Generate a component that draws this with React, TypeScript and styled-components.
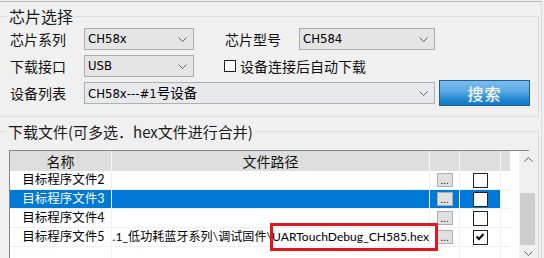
import React from "react";
import styled, { createGlobalStyle } from "styled-components";

const CJK = `"Noto Sans CJK SC", "Noto Sans", sans-serif`;
const LATIN_UI = `"Lato", "Noto Sans CJK SC", sans-serif`;
const NARROW = `"Liberation Sans Narrow", "DejaVu Sans Condensed", "Liberation Sans", sans-serif`;

const GlobalStyle = createGlobalStyle`
  html, body { margin: 0; padding: 0; background: #f0f0f0; }
  body { width: 544px; height: 258px; overflow: hidden; font-family: ${CJK}; color: #000; }
  #root { width: 544px; height: 258px; overflow: hidden; }
  * { box-sizing: border-box; }
`;

const Page = styled.div`
  width: 544px;
  height: 258px;
  overflow: hidden;
  padding-top: 1px;
  background: #f0f0f0;
`;

const Frame = styled.div`
  margin-left: -10px;
  width: 552px;
  height: 320px;
  border-top: 1px solid #b9b9b9;
  border-right: 1px solid #dcdcdc;
  padding-right: 2px;
`;

const Group = styled.fieldset<{ $pt: number; $pb: number; $pl: number }>`
  margin: 5px 0 0 0;
  padding: ${(p) => p.$pt}px 0 ${(p) => p.$pb}px ${(p) => p.$pl}px;
  border: 1px solid #dcdcdc;
  min-width: 0;
`;

const Legend = styled.legend<{ $size: number }>`
  font: ${(p) => p.$size}px/19px ${CJK};
  padding: 0 2px;
  margin-left: -3px;
  color: #1a1a1a;
`;

const Form = styled.div`
  display: grid;
  grid-template-columns: 74px 110px 31px 74px 136px 4px 91px;
  grid-template-rows: repeat(3, 22px);
  row-gap: 5px;
  align-items: center;
`;

const Label = styled.div<{ $col?: string }>`
  grid-column: ${(p) => p.$col || "auto"};
  font: 14px/22px ${CJK};
  color: #111;
  white-space: nowrap;
`;

const Combo = styled.div<{ $col: string; $light?: boolean }>`
  grid-column: ${(p) => p.$col};
  height: 22px;
  border: 1px solid ${(p) => (p.$light ? "#aab0b6" : "#adadad")};
  background: ${(p) => (p.$light ? "#e7e9ec" : "#e5e5e5")};
  display: flex;
  align-items: center;
  justify-content: space-between;
  padding: 0 6px 0 3px;
`;

const ComboText = styled.span`
  font: 13px/20px ${NARROW};
  color: #000;
  white-space: nowrap;
  & > b {
    font-weight: normal;
    font-family: ${CJK};
    font-size: 13.5px;
  }
`;

const CheckRow = styled.label`
  grid-column: 4 / span 3;
  display: flex;
  align-items: center;
  gap: 4px;
  margin-left: -1px;
  font: 14px/22px ${CJK};
  color: #111;
  white-space: nowrap;
`;

const Box = styled.span<{ $size: number }>`
  width: ${(p) => p.$size}px;
  height: ${(p) => p.$size}px;
  border: 1px solid #222;
  background: #fff;
  display: inline-flex;
  align-items: center;
  justify-content: center;
  flex: none;
`;

const SearchButton = styled.button`
  grid-column: 7;
  align-self: center;
  width: 91px;
  height: 26px;
  padding: 0;
  border: 1px solid #1b5f9e;
  background: linear-gradient(to bottom, #7dbdee 0%, #58a7e2 45%, #2489d2 75%, #0c78c6 100%);
  color: #fff;
  font: 16px/24px ${CJK};
  letter-spacing: 1px;
  text-shadow: 0 0 2px rgba(255, 255, 255, 0.4);
`;

const TableBox = styled.div`
  position: relative;
  width: 520px;
  height: 130px;
  border: 1px solid #828790;
  background: #fff;
  display: flex;
`;

const Rows = styled.div`
  width: 500px;
  flex: none;
`;

const HeaderRow = styled.div`
  display: flex;
  height: 20px;
  background: #dedede;
`;

const HeadCell = styled.div<{ $w: number; $last?: boolean }>`
  width: ${(p) => p.$w}px;
  flex: none;
  border-right: ${(p) => (p.$last ? "none" : "1px solid #f7f7f7")};
  font: 14px/20px ${CJK};
  color: #111;
  text-align: center;
`;

const Row = styled.div`
  display: flex;
  height: 19px;
  border-bottom: 1px solid #f0f0f0;
`;

const Cell = styled.div<{ $w: number; $sel?: boolean; $align?: string; $last?: boolean }>`
  width: ${(p) => p.$w}px;
  flex: none;
  height: 18px;
  border-right: ${(p) => (p.$last ? "none" : `1px solid ${p.$sel ? "#f4f8fc" : "#f0f0f0"}`)};
  background: ${(p) => (p.$sel ? "#0078d7" : "#fff")};
  color: ${(p) => (p.$sel ? "#fff" : "#000")};
  display: flex;
  align-items: center;
  justify-content: ${(p) => p.$align || "center"};
  overflow: hidden;
  font: 12.5px/18px ${LATIN_UI};
  white-space: nowrap;
`;

const NameText = styled.span`
  padding-left: 6px;
`;

const PathText = styled.span`
  flex: none;
  font-size: 12.1px;
`;

const DotsButton = styled.span`
  width: 16px;
  height: 14px;
  border: 1px solid #adadad;
  background: #e1e1e1;
  color: #000;
  font: 10px/14px "Liberation Sans", sans-serif;
  text-align: center;
  letter-spacing: 0;
`;

const ScrollBar = styled.div`
  width: 18px;
  margin-left: 9px;
  flex: none;
  background: #f0f0f0;
  display: flex;
  flex-direction: column;
`;

const Arrow = styled.div`
  height: 17px;
  display: flex;
  align-items: center;
  justify-content: center;
  flex: none;
`;

const Track = styled.div`
  height: 77px;
  display: flex;
  flex-direction: column;
  justify-content: flex-end;
  flex: none;
`;

const Thumb = styled.div`
  height: 52px;
  margin: 0 2px 0 1px;
  background: #cdcdcd;
`;

const Highlight = styled.div`
  position: absolute;
  left: 260px;
  top: 72px;
  width: 168px;
  height: 28px;
  border: 3px solid #e5151d;
  pointer-events: none;
`;

const Chevron = ({ up }: { up?: boolean }) => (
  <svg width="9" height="5" viewBox="0 0 9 5">
    <polyline
      points={up ? "0.5,4.5 4.5,0.5 8.5,4.5" : "0.5,0.5 4.5,4.5 8.5,0.5"}
      fill="none"
      stroke="#606060"
      strokeWidth="1"
    />
  </svg>
);

const Tick = () => (
  <svg width="10" height="8" viewBox="0 0 10 8">
    <polyline points="1.5,3.5 4,6 8.5,1" fill="none" stroke="#000" strokeWidth="2" />
  </svg>
);

type FileRow = { name: string; path?: string; checked?: boolean; selected?: boolean };

const files: FileRow[] = [
  { name: "目标程序文件2" },
  { name: "目标程序文件3", selected: true },
  { name: "目标程序文件4" },
  {
    name: "目标程序文件5",
    path: "D:\\WCH\\CH585EVT\\EVT\\EXAM\\BLE\\V1.1_低功耗蓝牙系列\\调试固件\\UARTouchDebug_CH585.hex",
    checked: true,
  },
];

const COLS = [102, 318, 30, 41];

export default function App() {
  return (
    <>
      <GlobalStyle />
      <Page>
        <Frame>
          <Group $pt={2} $pb={12} $pl={19}>
            <Legend $size={16}>芯片选择</Legend>
            <Form>
              <Label>芯片系列</Label>
              <Combo $col="2">
                <ComboText>CH58x</ComboText>
                <Chevron />
              </Combo>
              <Label $col="4">芯片型号</Label>
              <Combo $col="5">
                <ComboText>CH584</ComboText>
                <Chevron />
              </Combo>

              <Label $col="1">下载接口</Label>
              <Combo $col="2">
                <ComboText>USB</ComboText>
                <Chevron />
              </Combo>
              <CheckRow>
                <Box $size={12} />
                设备连接后自动下载
              </CheckRow>

              <Label $col="1">设备列表</Label>
              <Combo $col="2 / 6" $light>
                <ComboText>
                  CH58x---#1<b>号设备</b>
                </ComboText>
                <Chevron />
              </Combo>
              <SearchButton>搜索</SearchButton>
            </Form>
          </Group>

          <Group $pt={9} $pb={0} $pl={18}>
            <Legend $size={15}>下载文件(可多选．hex文件进行合并)</Legend>
            <TableBox>
              <Rows>
                <HeaderRow>
                  <HeadCell $w={COLS[0]}>名称</HeadCell>
                  <HeadCell $w={COLS[1]}>文件路径</HeadCell>
                  <HeadCell $w={COLS[2]} />
                  <HeadCell $w={COLS[3]} />
                  <HeadCell $w={9} $last />
                </HeaderRow>
                {files.map((f) => (
                  <Row key={f.name}>
                    <Cell $w={COLS[0]} $sel={f.selected}>
                      <NameText>{f.name}</NameText>
                    </Cell>
                    <Cell $w={COLS[1]} $sel={f.selected} $align="flex-end">
                      {f.path && <PathText>{f.path}</PathText>}
                    </Cell>
                    <Cell $w={COLS[2]} $sel={f.selected}>
                      <DotsButton>...</DotsButton>
                    </Cell>
                    <Cell $w={COLS[3]} $sel={f.selected}>
                      <Box $size={15}>{f.checked && <Tick />}</Box>
                    </Cell>
                    <Cell $w={9} $last />
                  </Row>
                ))}
                <Row>
                  <Cell $w={COLS[0]} />
                  <Cell $w={COLS[1]} />
                  <Cell $w={COLS[2]} />
                  <Cell $w={COLS[3]} />
                  <Cell $w={9} $last />
                </Row>
              </Rows>
              <ScrollBar>
                <Arrow>
                  <Chevron up />
                </Arrow>
                <Track>
                  <Thumb />
                </Track>
                <Arrow>
                  <Chevron />
                </Arrow>
              </ScrollBar>
              <Highlight />
            </TableBox>
          </Group>
        </Frame>
      </Page>
    </>
  );
}
